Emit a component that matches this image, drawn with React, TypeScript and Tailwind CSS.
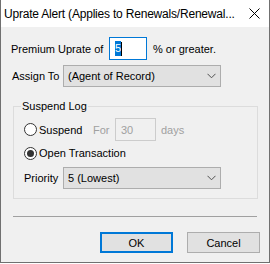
import React from 'react';

const font = { fontFamily: '"Liberation Sans", Arial, sans-serif' };

function Chevron() {
  return (
    <svg width="9" height="6" viewBox="0 0 9 6" className="text-[#505050] shrink-0">
      <path d="M0.5 0.8 L4.5 4.8 L8.5 0.8" fill="none" stroke="currentColor" strokeWidth="1" />
    </svg>
  );
}

function Select({ value, width }: { value: string; width: string }) {
  return (
    <div className={`${width} shrink-0 h-[22px] bg-[#e1e1e1] border border-[#adadad] flex items-center justify-between pl-[4px] pr-[4px]`}>
      <span className="whitespace-nowrap">{value}</span>
      <Chevron />
    </div>
  );
}

function Radio({ checked, label }: { checked: boolean; label: string }) {
  return (
    <div className="flex items-center whitespace-nowrap">
      <div className="w-[13px] h-[13px] shrink-0 rounded-full border border-[#333333] bg-white flex items-center justify-center">
        {checked && <div className="w-[7px] h-[7px] rounded-full bg-[#333333]" />}
      </div>
      <span className="ml-[2px]">{label}</span>
    </div>
  );
}

export default function App() {
  return (
    <div className="w-[270px] h-[264px] bg-white text-[11px] leading-[16px] text-black whitespace-nowrap" style={font}>
      <div className="w-[270px] h-[263px] border-x border-b border-[#707070] flex flex-col">
        {/* title bar */}
        <div className="h-[27px] shrink-0 bg-white flex items-center justify-between pl-[3px] pr-[9px] text-[12px] tracking-[-0.2px]">
          <span>Uprate Alert (Applies to Renewals/Renewal...</span>
          <svg width="11" height="11" viewBox="0 0 11 11" className="shrink-0">
            <path d="M0.5 0.5 L10.5 10.5 M10.5 0.5 L0.5 10.5" stroke="#000" strokeWidth="1" />
          </svg>
        </div>

        <div className="flex-1 bg-[#f0f0f0] flex flex-col">
          {/* premium uprate */}
          <div className="flex items-center mt-[10px] pl-[10px] h-[23px]">
            <span className="w-[98px] shrink-0">Premium Uprate of</span>
            <div className="w-[38px] h-[23px] shrink-0 bg-white border border-[#0078d7] flex items-center pl-[5px]">
              <span className="bg-[#0078d7] text-white leading-[15px]">5</span>
              <span className="w-px h-[14px] bg-black" />
            </div>
            <span className="ml-[6px]">% or greater.</span>
          </div>

          {/* assign to */}
          <div className="flex items-center mt-[5px] pl-[11px]">
            <span className="w-[51px] shrink-0">Assign To</span>
            <Select value="(Agent of Record)" width="w-[158px]" />
          </div>

          {/* suspend log */}
          <fieldset className="ml-[12px] w-[245px] mt-[11px] border border-[#dcdcdc] pl-[10px] pb-[9px]">
            <legend className="ml-[-3px] px-[1px]">Suspend Log</legend>
            <div className="flex items-center mt-[4px] h-[23px]">
              <div className="w-[69px] shrink-0">
                <Radio checked={false} label="Suspend" />
              </div>
              <span className="text-[#a0a0a0] w-[22px] shrink-0">For</span>
              <div className="w-[41px] h-[23px] shrink-0 border border-[#cccccc] bg-[#f0f0f0] text-[#a0a0a0] flex items-center pl-[5px]">
                30
              </div>
              <span className="ml-[5px] text-[#a0a0a0]">days</span>
            </div>
            <div className="flex items-center mt-[2px] h-[20px]">
              <Radio checked={true} label="Open Transaction" />
            </div>
            <div className="flex items-center mt-[4px]">
              <span className="w-[39px] shrink-0">Priority</span>
              <Select value="5 (Lowest)" width="w-[158px]" />
            </div>
          </fieldset>

          {/* separator */}
          <div className="ml-[12px] w-[244px] h-px bg-[#a0a0a0] mt-[17px]" />

          {/* buttons */}
          <div className="flex mt-[15px] ml-[99px] gap-[14px]">
            <button className="w-[73px] h-[21px] bg-[#e1e1e1] border-2 border-[#0078d7] flex items-center justify-center">
              OK
            </button>
            <button className="w-[73px] h-[21px] bg-[#e1e1e1] border border-[#adadad] flex items-center justify-center">
              Cancel
            </button>
          </div>
        </div>
      </div>
    </div>
  );
}
